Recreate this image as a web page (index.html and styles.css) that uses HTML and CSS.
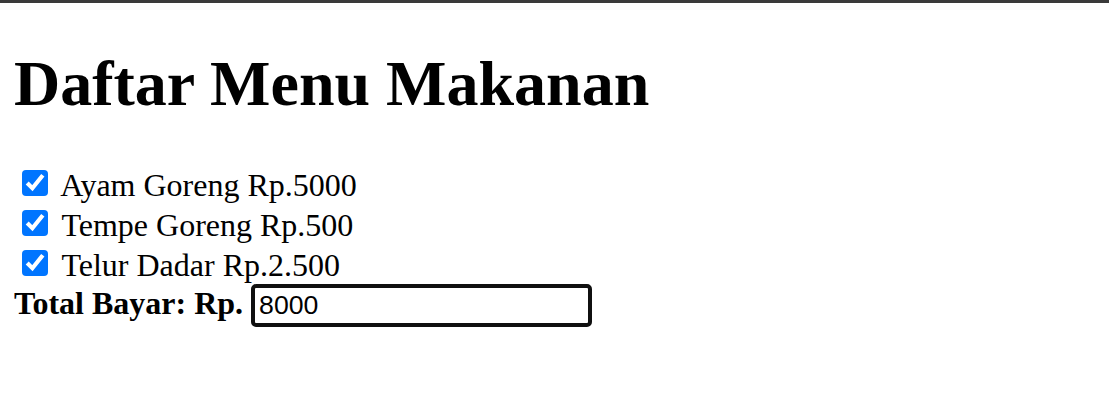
FILE: index.html
```html
<!DOCTYPE html>
<html lang="id">
<head>
<meta charset="utf-8">
<title>Daftar Menu Makanan</title>
<link rel="stylesheet" href="styles.css">
</head>
<body class="page">
<div class="topbar"></div>
<h1 class="title">Daftar Menu Makanan</h1>
<form class="menu">
<input type="checkbox" class="item" checked> Ayam Goreng Rp.5000<br>
<input type="checkbox" class="item" checked> Tempe Goreng Rp.500<br>
<input type="checkbox" class="item" checked> Telur Dadar Rp.2.500<br>
<b class="total-label">Total Bayar: Rp.</b> <input type="text" class="total-input" value="8000">
</form>
</body>
</html>
```
FILE: styles.css
```css
html {
  background: #ffffff;
}
.page {
  zoom: 2;
  margin: 8px 7px;
  font-family: "Liberation Serif", "Times New Roman", serif;
  font-size: 16px;
  color: #000000;
}
.topbar {
  position: fixed;
  top: 0;
  left: 0;
  right: 0;
  height: 1.5px;
  background: #3a3a3a;
}
.title {
  font-size: 32px;
  font-weight: bold;
  margin: 15.5px 0 21.44px;
}
.menu {
  margin: 0;
}
.item {
  accent-color: #0075ff;
  margin: 3px 3px 3px 4px;
}
.total-label {
  font-weight: bold;
}
.total-input {
  box-sizing: border-box;
  width: 170.5px;
  font-family: "Liberation Sans", Arial, sans-serif;
  font-size: 13.333px;
  padding: 1px 2px;
  border: 2px solid #101010;
  border-radius: 2.5px;
  color: #000000;
  outline: none;
}
```
